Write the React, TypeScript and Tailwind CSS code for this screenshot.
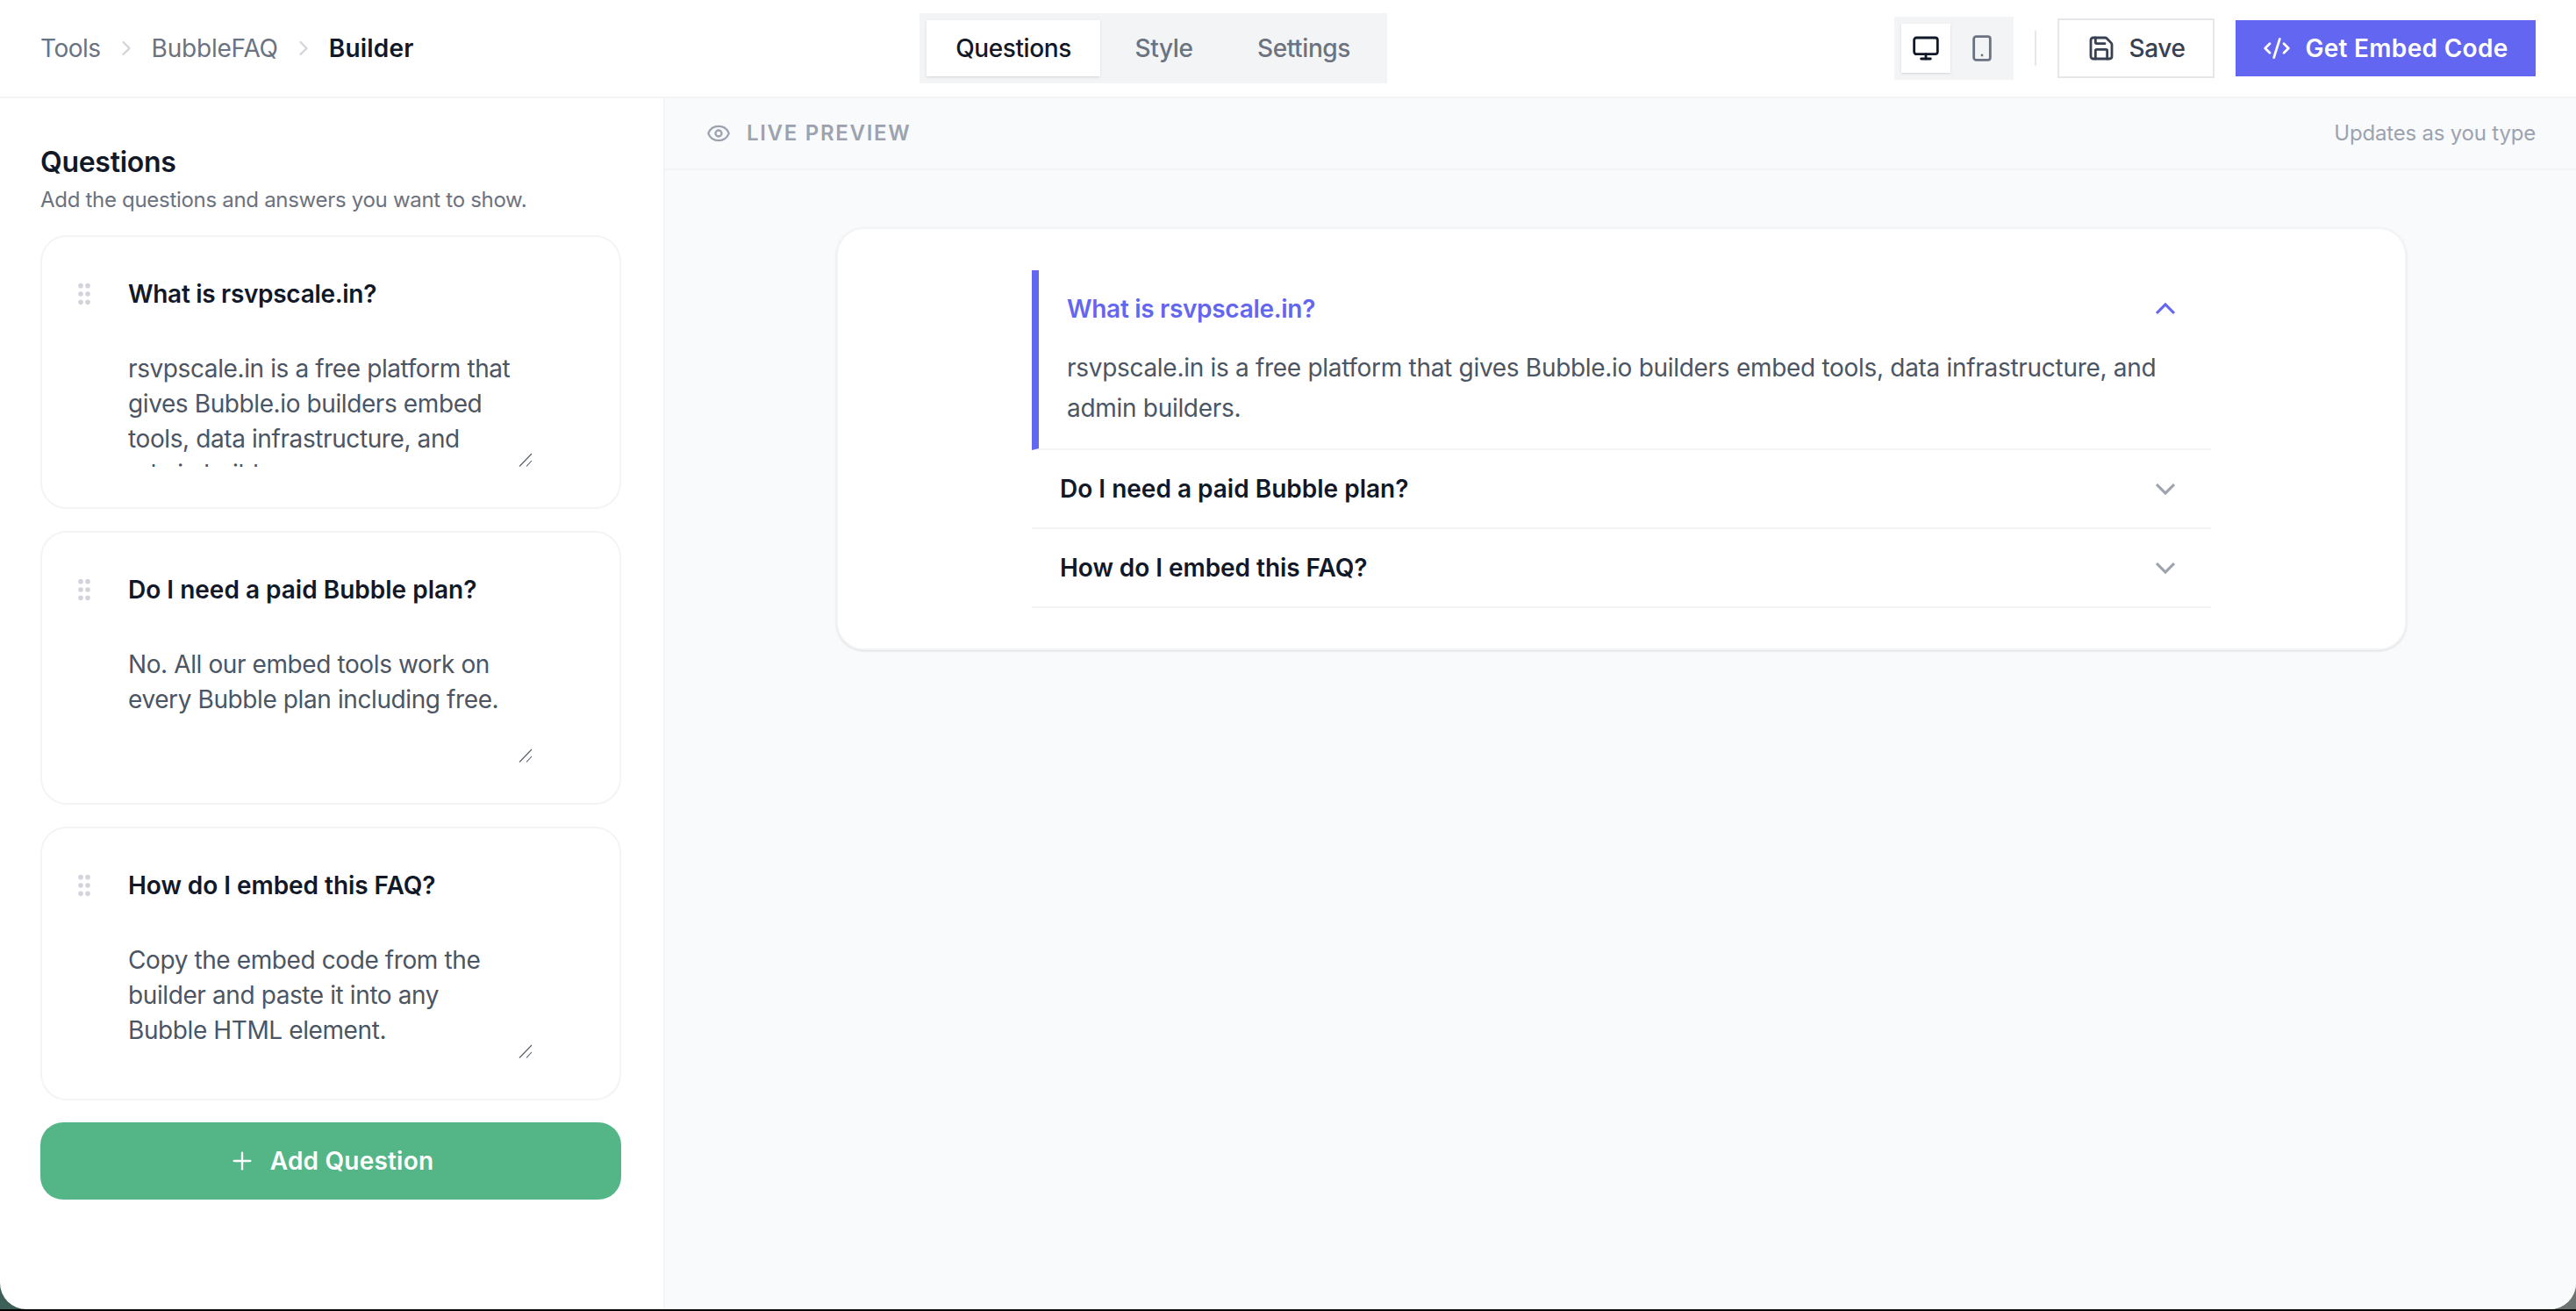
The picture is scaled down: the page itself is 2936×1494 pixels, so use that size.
import { ChevronRight, Monitor, Smartphone, Save, CodeXml, GripVertical, Plus, Eye } from "lucide-react";

const questions = [
  { q: "What is rsvpscale.in?", a: "rsvpscale.in is a free platform that gives Bubble.io builders embed tools, data infrastructure, and admin builders.", t: "tracking-[-0.3px]" },
  { q: "Do I need a paid Bubble plan?", a: "No. All our embed tools work on every Bubble plan including free.", t: "tracking-[0px]" },
  { q: "How do I embed this FAQ?", a: "Copy the embed code from the builder and paste it into any Bubble HTML element.", t: "tracking-[-0.05px]" },
];

function Chevron({ up }: { up?: boolean }) {
  return (
    <svg width="40" height="40" viewBox="0 0 24 24" fill="none" stroke="currentColor" strokeWidth="1.9" className={up ? "text-[#6366f1]" : "text-[#9ca3af]"}>
      <path d={up ? "M6 15l6-6 6 6" : "M6 9l6 6 6-6"} />
    </svg>
  );
}

export default function App() {
  return (
    <div className="h-[1494px] w-[2936px] overflow-hidden border-b-2 border-black bg-[linear-gradient(90deg,#3c5f58,#5b6b66_50%,#6d7370)] font-['Inter',sans-serif] text-[28px] tracking-[-0.3px]">
      <div className="flex h-[1492px] flex-col overflow-hidden rounded-b-[30px] bg-white">
        <header className="flex h-[112px] shrink-0 items-center justify-between border-b-2 border-[#f3f4f6] px-[46px]">
          <div className="flex w-[1002px] items-center gap-[15px] tracking-[-0.5px]">
            <span className="text-[#6b7280]">Tools</span>
            <ChevronRight size={28} className="text-[#d1d5db]" />
            <span className="tracking-[-0.2px] text-[#6b7280]">BubbleFAQ</span>
            <ChevronRight size={28} className="text-[#d1d5db]" />
            <span className="font-semibold tracking-[0.2px] text-[#111827]">Builder</span>
          </div>
          <div className="flex h-[80px] items-center gap-[8px] bg-[#f3f4f6] p-[8px] font-medium tracking-[-0.4px]">
            <div className="flex h-[64px] w-[198px] items-center justify-center bg-white text-[#111827] shadow-sm">Questions</div>
            <div className="flex h-[64px] w-[129px] items-center justify-center text-[#6b7280]">Style</div>
            <div className="flex h-[64px] w-[174px] items-center justify-center text-[#6b7280]">Settings</div>
          </div>
          <div className="ml-auto flex items-center gap-[24px]">
            <div className="flex gap-[8px] bg-[#f3f4f6] p-[8px]">
              <div className="flex h-[56px] w-[56px] items-center justify-center bg-white text-[#111827] shadow-sm"><Monitor size={32} strokeWidth={2.1} /></div>
              <div className="flex h-[56px] w-[56px] items-center justify-center text-[#6b7280]"><Smartphone size={32} strokeWidth={2.1} /></div>
            </div>
            <div className="h-[40px] w-[2px] bg-[#e5e7eb]" />
            <div className="flex h-[68px] w-[179px] items-center justify-center gap-[16px] border-2 border-[#e5e7eb] font-medium tracking-[-0.4px] text-[#374151]"><Save size={32} strokeWidth={2.1} />Save</div>
            <div className="flex h-[64px] w-[342px] items-center justify-center gap-[16px] bg-[#6366f1] font-semibold tracking-[0.3px] text-white"><CodeXml size={32} strokeWidth={2.1} />Get Embed Code</div>
          </div>
        </header>
        <div className="flex min-h-0 flex-1">
          <aside className="w-[758px] shrink-0 border-r-2 border-[#f3f4f6] pl-[46px] pr-[48px] pt-[50px]">
            <h2 className="text-[32px] font-semibold leading-[46px] tracking-[-0.3px] text-[#111827]">Questions</h2>
            <p className="mt-[4px] text-[24px] leading-[32px] tracking-[-0.3px] text-[#6b7280]">Add the questions and answers you want to show.</p>
            <div className="mt-[24px] flex flex-col gap-[25px]">
              {questions.map((x) => (
                <div key={x.q} className="flex h-[312px] gap-[34px] rounded-[30px] border-2 border-[#f3f4f6] bg-white pl-[32px] pr-[99px] pt-[46px]">
                  <GripVertical size={32} strokeWidth={2.2} className="mt-[3px] shrink-0 text-[#d1d5db]" />
                  <div className="flex min-w-0 flex-1 flex-col">
                    <div className={`h-[38px] font-semibold leading-[38px] text-[#111827] ${x.t}`}>{x.q}</div>
                    <div className="relative mt-[46px] h-[132px]">
                      <textarea readOnly defaultValue={x.a} className="block h-[132px] w-full resize-none overflow-hidden bg-transparent pr-[16px] leading-[40px] tracking-[-0.4px] text-[#4b5563] outline-none" />
                      <svg width="16" height="16" viewBox="0 0 16 16" className="absolute bottom-0 right-0 text-[#555b66]" fill="none" stroke="currentColor" strokeWidth="1.1">
                        <path d="M1 15.5 15 1M9 15.5 15 9" />
                      </svg>
                    </div>
                  </div>
                </div>
              ))}
            </div>
            <div className="mt-[25px] flex h-[88px] items-center justify-center gap-[16px] rounded-[26px] bg-[#54b687] font-semibold tracking-[0.2px] text-white"><Plus size={32} strokeWidth={1.75} />Add Question</div>
          </aside>
          <main className="min-w-0 flex-1 bg-[#f9fafb]">
            <div className="flex h-[82px] items-center justify-between border-b-2 border-[#f3f4f6] pl-[47px] pr-[46px]">
              <div className="flex items-center gap-[18px] text-[24px] font-semibold tracking-[1.7px] text-[#9ca3af]"><Eye size={28} />LIVE PREVIEW</div>
              <div className="text-[24px] tracking-[-0.2px] text-[#9ca3af]">Updates as you type</div>
            </div>
            <div className="ml-[195px] mt-[65px] h-[482px] w-[1790px] rounded-[32px] border-2 border-[#f3f4f6] bg-white px-[221px] pt-[47px] shadow-sm">
              <div className="border-b-2 border-l-8 border-b-[#f3f4f6] border-l-[#6366f1] pb-[23px] pl-[32px] pr-[32px]">
                <div className="flex h-[88px] items-center justify-between font-semibold tracking-[-0.3px] text-[#6366f1]">What is rsvpscale.in?<Chevron up /></div>
                <p className="pr-[24px] leading-[46px] text-[#4b5563]">rsvpscale.in is a free platform that gives Bubble.io builders embed tools, data infrastructure, and admin builders.</p>
              </div>
              {questions.slice(1).map((x) => (
                <div key={x.q} className={`flex h-[90px] items-center justify-between border-b-2 border-[#f3f4f6] px-[32px] font-semibold text-[#111827] ${x.t}`}>{x.q}<Chevron /></div>
              ))}
            </div>
          </main>
        </div>
      </div>
    </div>
  );
}
